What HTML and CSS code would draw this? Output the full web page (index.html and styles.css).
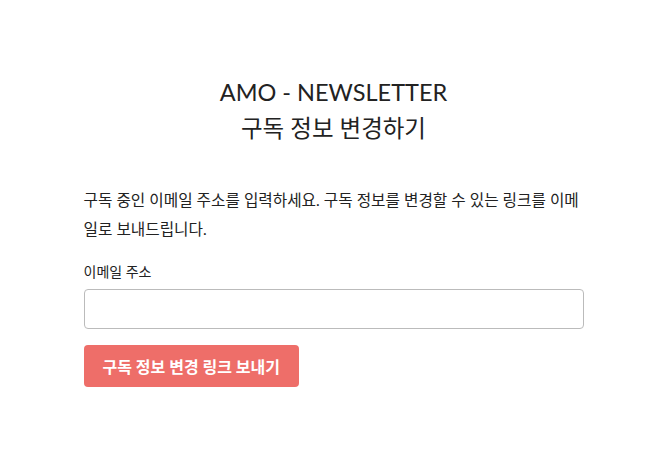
FILE: index.html
```html
<!DOCTYPE html>
<html lang="ko">
<head>
    <meta charset="UTF-8">
    <meta name="viewport" content="width=device-width, initial-scale=1.0">
    <title>AMO - NEWSLETTER 구독 정보 변경하기</title>
    <link rel="stylesheet" href="styles.css">
</head>
<body>

    <div class="container">
        <h2 class="title">AMO - NEWSLETTER<br>구독 정보 변경하기</h2>

        <p class="desc">구독 중인 이메일 주소를 입력하세요. 구독 정보를 변경할 수 있는 링크를 이메일로 보내드립니다.</p>

        <form class="form">
            <label for="email">이메일 주소</label>
            <input type="email" id="email">
            <button type="button">구독 정보 변경 링크 보내기</button>
        </form>
    </div>

</body>
</html>
```

FILE: styles.css
```css
body {
    font-family: Lato, "Noto Sans CJK KR", sans-serif;
    background-color: #fff;
    color: #222;
    margin: 0;
}
.container {
    max-width: 500px;
    margin: 0 auto;
    padding-top: 74px;
}
.title {
    font-weight: 400;
    font-size: 23.5px;
    line-height: 36px;
    text-align: center;
    margin: 0 0 40px;
}
.desc {
    font-size: 15.7px;
    line-height: 29px;
    margin: 0 0 17px;
}
.form label {
    display: block;
    font-size: 14px;
    margin-bottom: 8px;
}
.form input {
    display: block;
    box-sizing: border-box;
    width: 100%;
    height: 40px;
    border: 1px solid #bbb;
    border-radius: 4px;
    padding: 0 10px;
    font-size: 15px;
    margin: 0 0 16px;
}
.form button {
    background-color: #ee6e69;
    color: white;
    border: none;
    border-radius: 4px;
    font-family: inherit;
    font-size: 16px;
    font-weight: 700;
    height: 42px;
    padding: 0 19px;
    cursor: pointer;
}
```
